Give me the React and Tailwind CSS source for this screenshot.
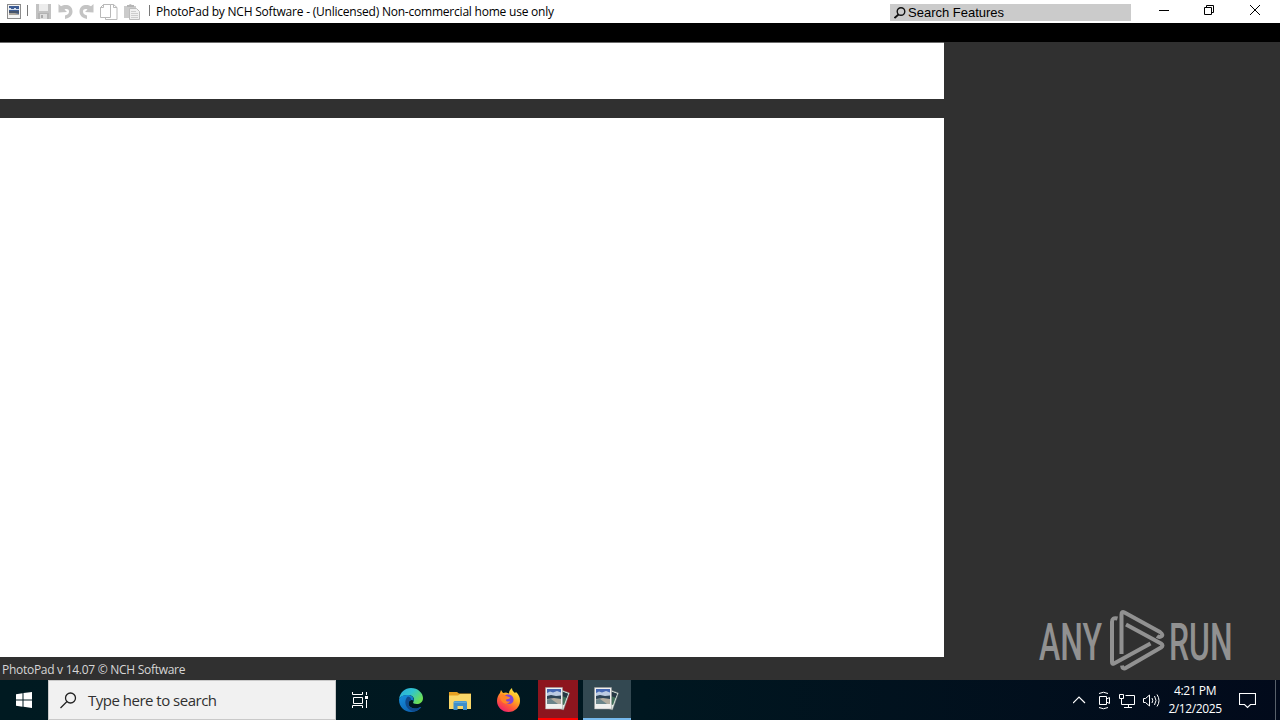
import React from "react";

const AppIcon = () => (
  <svg width="14" height="15" viewBox="0 0 14 15" className="shrink-0">
    <rect x="0.5" y="0.5" width="13" height="14" fill="#f4f4f4" stroke="#8c8c8c" />
    <rect x="2" y="2" width="10" height="9" fill="#3d5c94" />
    <path d="M2 4h2v1h3V4h2v1h3v1H2z" fill="#d5dfec" />
    <rect x="2" y="7" width="10" height="2" fill="#46546a" />
    <path d="M2 9h6l4 1v1H2z" fill="#a9a49c" />
  </svg>
);

// greyed out quick access icons
const SaveIcon = () => (
  <svg width="15" height="15" viewBox="0 0 15 15" className="shrink-0">
    <path d="M0 0h15v15H0z" fill="#c2c2c2" />
    <path d="M3 0h9v7H3z" fill="#ececec" />
    <path d="M2 9h11v6H2z" fill="#b4b4b4" />
    <path d="M4 10h7v5H4z" fill="#dedede" />
    <path d="M5 11h2v3H5z" fill="#aaa" />
  </svg>
);

const UndoIcon = ({ flip }) => (
  <svg width="15" height="15" viewBox="0 0 15 15" className={flip ? "shrink-0 -scale-x-100" : "shrink-0"}>
    <path d="M.5 0L3 2.200C7-.3 14.500.5 14.500 7.500c0 4-3 6.500-7.500 7.500v-3.500c3-.7 4-2 4-4C11 5 8.500 4.500 6.500 5.500L9 8 .5 8.500z" fill="#c4c4c4" />
  </svg>
);

const CopyIcon = () => (
  <svg width="18" height="16" viewBox="0 0 18 16" className="shrink-0" fill="#fff" stroke="#b9b9b9">
    <path d="M5.500.5h8l3.500 3v12H5.500z" />
    <path d="M.5 3.500l3-3h7v13H.5z" />
    <path d="M3.500.5v3h-3M13.500.5v3H17" fill="none" />
  </svg>
);

const PasteIcon = () => (
  <svg width="16" height="16" viewBox="0 0 16 16" className="shrink-0">
    <path d="M0 2h12v12H0z" fill="#cbcbcb" />
    <path d="M3 3V1h2l1-1 2 1h2v2z" fill="#b5b5b5" />
    <path d="M5.500 4.500h7l3 3v8h-10z" fill="#f0f0f0" stroke="#bcbcbc" />
    <path d="M7 7.500h5M7 9.500h7M7 11.500h7M7 13.500h7" fill="none" stroke="#cdcdcd" />
  </svg>
);

const PhotoIcon = () => (
  <svg width="26" height="24" viewBox="0 0 26 24">
    <path d="M15 2.500l9.500 3.500-6 17-7-2.500z" fill="#e3e9e5" stroke="#6b7477" strokeWidth=".5" />
    <path d="M17 4.500l6 2.300-4 11.200-3-1z" fill="#42705a" />
    <path d="M17 4.500l6 2.300-1.500 4L17 9z" fill="#263845" />
    <path d="M.5.500h17v21.500H.5z" fill="#f1f1ef" stroke="#9b9b9b" strokeWidth=".5" />
    <path d="M2 2h14v5H2z" fill="#4467b2" />
    <path d="M2 6l3-1.500 3 1L12 4l4 1.500V9H2z" fill="#bccbe2" />
    <path d="M2 9l4-1 5 1 5-.5V12H2z" fill="#2e4456" />
    <path d="M2 12l7-1 7 1v5H2z" fill="#b2ac9f" />
    <path d="M2 12.500l4-.5 7 5H2z" fill="#6b858b" />
  </svg>
);

const EdgeIcon = () => (
  <svg width="24" height="24" viewBox="0 0 24 24">
    <defs>
      <linearGradient id="edgeTop" x1="0" y1="0" x2="1" y2=".6">
        <stop offset="0" stopColor="#2aa9df" />
        <stop offset=".5" stopColor="#30c4cf" />
        <stop offset="1" stopColor="#6de052" />
      </linearGradient>
      <linearGradient id="edgeLeft" x1="0" y1="0" x2=".8" y2="1">
        <stop offset="0" stopColor="#1690df" />
        <stop offset="1" stopColor="#0c5cab" />
      </linearGradient>
    </defs>
    <path d="M.1 11C1 4.500 6 .1 12 .1c7 0 12 5 12 10 0 4-3 6-6.200 6-2.800 0-4.300-1-3.500-2 2-3 0-7-5-7C5 7.100 1.500 8.500.1 11z" fill="url(#edgeTop)" />
    <path d="M.1 11C1.500 8 5 6.700 9 7c4 0 6.500 3 5.500 6-1-2-5-1-5 2.500 0 3.500 3.500 5 7 5 2 0 3.500-.6 5-1.500.5-.2.8 0 .5.500C19.500 22.700 16 24 12 24 5 24-.5 18 .1 11z" fill="url(#edgeLeft)" />
    <path d="M9 8.500C5.500 11 5.500 17 9 20.500c1.500 1.500 3.500 2.500 6 3 3-.7 5.500-2 7-4 .3-.5 0-.7-.5-.5-1.500.9-3 1.500-5 1.500-3.500 0-7-1.500-7-5 0-2 1-3.300 2.700-3.600C12 10 11 8.800 9 8.500z" fill="#104a8c" />
  </svg>
);

const FolderIcon = () => (
  <svg width="22" height="19" viewBox="0 0 22 19">
    <path d="M0 1h8l2 1.500h12V6H0z" fill="#e5a021" />
    <path d="M0 4.500h9L11 3h11v15H0z" fill="#f9d768" />
    <path d="M4.500 19v-7.500q0-1.500 1.500-1.500h10.500q1.500 0 1.500 1.500V19h-4v-4H8.500v4z" fill="#3f8fc9" />
    <path d="M5 10.500h12.500V12H5z" fill="#5fa9d8" />
  </svg>
);

const FirefoxIcon = () => (
  <svg width="23" height="24" viewBox="0 0 23 24">
    <defs>
      <linearGradient id="fox" x1=".85" y1="0" x2=".25" y2="1">
        <stop offset="0" stopColor="#fff04a" />
        <stop offset=".4" stopColor="#ffac21" />
        <stop offset=".7" stopColor="#ff5a38" />
        <stop offset="1" stopColor="#ed1c72" />
      </linearGradient>
    </defs>
    <path d="M3 5l1-3 2 3 3-.5 3 1C12 3 13 1.500 15 0c0 2 1 3.500 3 5l1-1c3 3 4 5 4 9 0 6-5 11-11.500 11S0 19 0 13c0-3 1-6 3-8z" fill="url(#fox)" />
    <path d="M7 8c2-2 6-2 8 0 3 3 1.500 8-3 8-3 0-5-1.500-5-4l4-1c1 0 2-1 2-1.500z" fill="#8045d5" />
    <path d="M3 7c2-1.500 4-1 6 1l3 1c-.5 1.500-3 1.500-3 3 0 1.500 2 2 4 1-1 2.500-3 3-5 2.500-4-1-5-5-5-8.500z" fill="#ff8427" />
  </svg>
);

const Watermark = () => (
  <svg
    width="250"
    height="80"
    viewBox="0 0 250 80"
    className="absolute left-[1030px] top-[600px]"
    fontFamily="Roboto, sans-serif"
    fontSize="51"
    fontWeight="500"
    fill="#919191"
  >
    <text x="9" y="59.500" textLength="63" lengthAdjust="spacingAndGlyphs">ANY</text>
    <text x="139" y="59.500" textLength="63.500" lengthAdjust="spacingAndGlyphs">RUN</text>
    <g fill="none" stroke="#919191" strokeWidth="4" strokeLinejoin="round">
      <path d="M87.500 18.500q-5.500-1.500-5.500 3.500v40q0 2.500 2 1.500L120.500 43.500" />
      <path d="M91.500 54V14.500q0-3.500 3-2L130 32q4 3 1 4.500-2 1-4-.5" />
      <path d="M96 24.500L131 43.500q3 2 0 4L96.500 67.500q-4 2.500-4.500-2" />
    </g>
  </svg>
);

const TaskSlot = ({ children, className }) => (
  <div className={`flex h-10 shrink-0 items-center justify-center ${className}`}>{children}</div>
);

const TitleBar = () => (
  <div className="flex h-[23px] shrink-0 bg-white pl-[7px]">
    <div className="flex h-[23px] w-[149px] shrink-0 items-center">
      <AppIcon />
      <div className="mb-[2px] ml-[6px] h-[11px] w-px bg-[#777]" />
      <div className="ml-2 flex items-center">
        <SaveIcon />
        <div className="ml-[7px] flex"><UndoIcon /></div>
        <div className="ml-[6px] flex"><UndoIcon flip /></div>
        <div className="ml-[6px] flex"><CopyIcon /></div>
        <div className="ml-[6px] flex"><PasteIcon /></div>
      </div>
      <div className="mb-[2px] ml-[9px] h-[11px] w-px bg-[#777]" />
    </div>
    <div className="w-[734px] shrink-0 whitespace-nowrap font-['Open_Sans',sans-serif] text-[12px] leading-[24px] tracking-[-0.215px] text-black">
      PhotoPad by NCH Software - (Unlicensed) Non-commercial home use only
    </div>
    <div className="mt-1 flex h-[17px] w-[241px] shrink-0 items-center bg-[#cbcbcb] pl-1 font-['Liberation_Sans',sans-serif] text-[13px] leading-[17px] text-black">
      <svg width="13" height="13" viewBox="0 0 13 13" fill="none" stroke="#111" strokeWidth="1.400">
        <circle cx="7" cy="5.500" r="3.800" />
        <path d="M4.500 8.500L.5 12" strokeWidth="1.800" />
      </svg>
      <span className="ml-[1px]">Search Features</span>
    </div>
    <div className="flex flex-1 justify-end">
      <svg width="149" height="23" viewBox="0 0 149 23" fill="none" stroke="#000">
        <path d="M28 10.500h10" />
        <path d="M73.500 7.500h7v7h-7zM75.500 7V5.500h7v7H81" />
        <path d="M119 5l10 10M129 5l-10 10" />
      </svg>
    </div>
  </div>
);

const Taskbar = () => (
  <div className="flex h-10 shrink-0 items-center bg-linear-to-r from-[#001a21] via-[#001720] to-[#020a1b] font-['Open_Sans',sans-serif]">
    <TaskSlot className="w-12">
      <svg width="16" height="16" viewBox="0 0 16 16" fill="#fff">
        <path d="M0 2.200L6.500 1.300V7.500H0zM7.500 1.100L16 0v7.500H7.500zM0 8.500h6.500v6.200L0 13.800zM7.500 8.500H16V16l-8.500-1.200z" />
      </svg>
    </TaskSlot>
    <div className="flex h-10 w-[288px] shrink-0 items-center border border-[#c9c9c9] bg-[#f1f1f1] pl-[11px]">
      <svg width="17" height="17" viewBox="0 0 17 17" fill="none" stroke="#222" strokeWidth="1.300">
        <circle cx="10.500" cy="6" r="5" />
        <path d="M7 9.500L.5 16" />
      </svg>
      <span className="ml-[11px] whitespace-nowrap text-[15px] tracking-[-0.5px] text-[#303030]">Type here to search</span>
    </div>
    <TaskSlot className="w-12">
      <svg width="17" height="16" viewBox="0 0 17 16" fill="none" stroke="#fff">
        <path d="M.5 0v2.500h10V0M1.500 5.500h9v6h-9zM.5 16v-2.500h10V16M14.500 0v3M14.500 8v8" />
        <path d="M13 4h3v3h-3z" fill="#fff" stroke="none" />
      </svg>
    </TaskSlot>
    <TaskSlot className="ml-[3px] w-12"><EdgeIcon /></TaskSlot>
    <TaskSlot className="ml-px w-12"><FolderIcon /></TaskSlot>
    <TaskSlot className="w-12"><FirefoxIcon /></TaskSlot>
    <TaskSlot className="ml-[6px] w-10 border-b-2 border-[#f00] bg-[#8d151e]"><PhotoIcon /></TaskSlot>
    <TaskSlot className="ml-[5px] w-12 border-b-2 border-[#76b9ed] bg-[#334851]"><PhotoIcon /></TaskSlot>

    {/* system tray */}
    <div className="ml-auto flex h-10 w-[207px] shrink-0 items-center">
      <svg width="87" height="20" viewBox="0 0 87 20" className="shrink-0" fill="none" stroke="#fff">
        <path d="M0 13l6-6 6 6" strokeWidth="1.200" />
        <path d="M26.500 6.500h7v8h-7zM33.500 9l3-1.500v6l-3-1.500M26 3.500q4.500-2.500 9 0M26 17.500q4.500 2.500 9 0" />
        <path d="M52.500 5.500h9v9h-13v-2M51 17.500h8M55.500 14v3M46.500 4.500h4v4h-4zM48.500 9v4" />
        <path d="M70.500 8.500h2l4-3.500v11l-4-3.500h-2zM79 8q1.500 2.500 0 5M81.500 6q3 4.500 0 9M84 4.500q4 6 0 12" />
      </svg>
      <div className="-ml-px w-[72px] shrink-0 whitespace-nowrap text-center text-[12px] leading-[18px] tracking-[-0.4px] text-white">
        <div>4:21 PM</div>
        <div>2/12/2025</div>
      </div>
      <svg width="17" height="17" viewBox="0 0 17 17" className="ml-[8px] shrink-0" fill="none" stroke="#fff" strokeWidth="1.100">
        <path d="M.5 1.500h16v11h-5l-3 3-3-3h-5z" />
      </svg>
      <div className="ml-auto mr-1 h-10 w-px bg-[#59616b]" />
    </div>
  </div>
);

const App = () => {
  return (
    <div className="relative flex h-[720px] w-[1280px] flex-col overflow-hidden bg-[#303030]">
      <TitleBar />
      <div className="h-[19px] shrink-0 bg-black" />
      <div className="flex flex-1">
        {/* toolbar strip and canvas, both still blank */}
        <div className="flex w-[944px] flex-col">
          <div className="h-[57px] border-t border-[#6b6b6b] bg-white" />
          <div className="h-[19px]" />
          <div className="flex-1 bg-white" />
        </div>
        <div className="flex-1" />
      </div>
      <div className="h-[23px] shrink-0 pl-[2px] font-['Open_Sans',sans-serif] text-[12px] leading-[25px] tracking-[-0.28px] text-[#d6d6d6]">
        PhotoPad v 14.07 © NCH Software
      </div>
      <Taskbar />
      <Watermark />
    </div>
  );
};

export default App;
